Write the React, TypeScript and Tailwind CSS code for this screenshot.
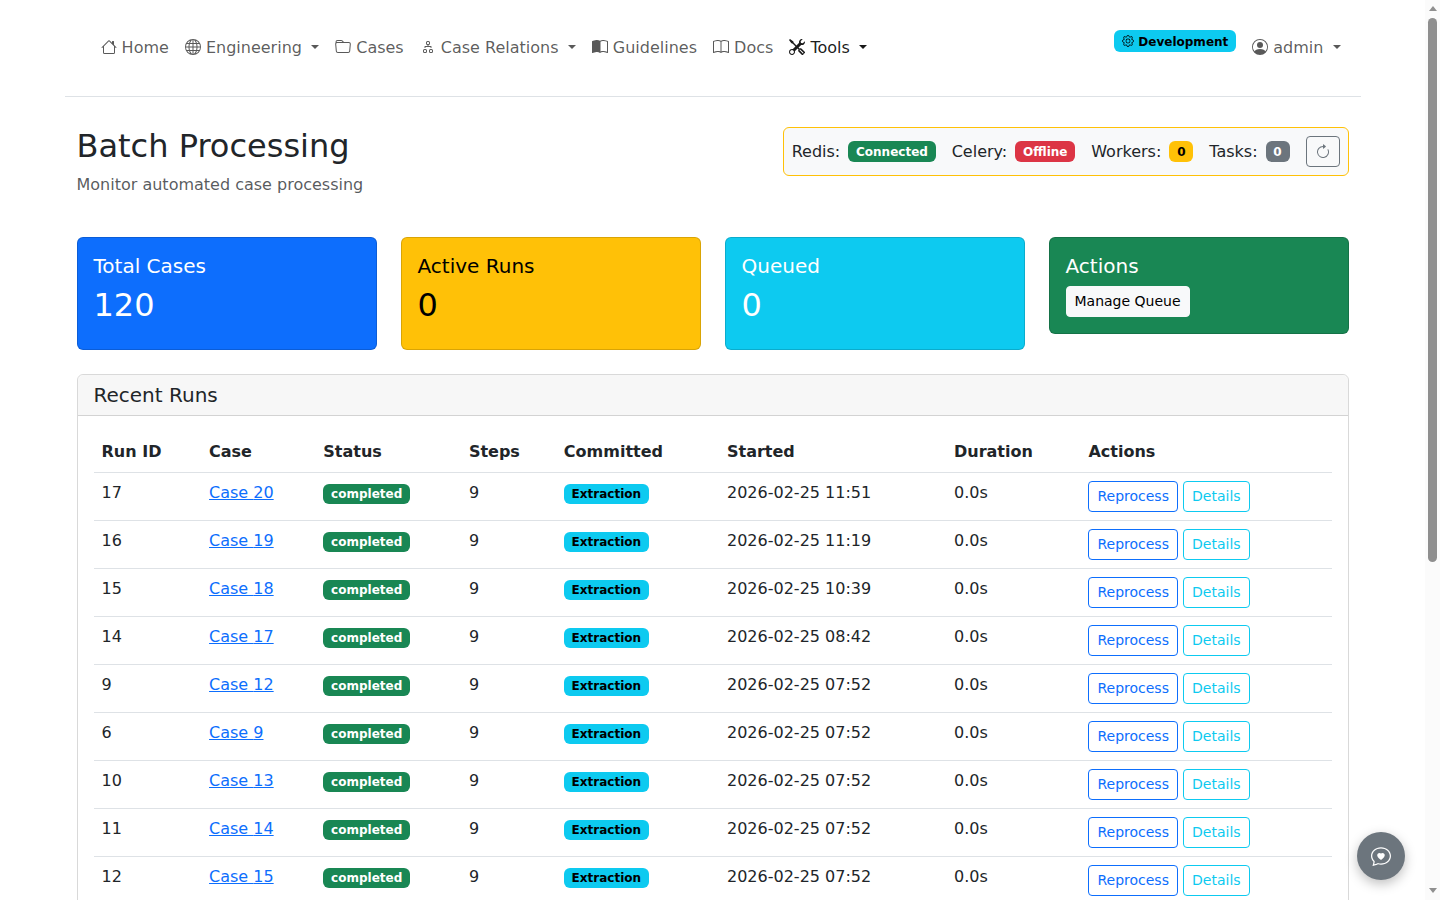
import {
  BsArrowClockwise, BsBook, BsBookHalf, BsChatHeart, BsDiagram2, BsFolder, BsGear,
  BsGlobe, BsHouse, BsPersonCircle, BsTools,
} from 'react-icons/bs';
import type { IconType } from 'react-icons';

const NAV_ITEMS: { label: string; icon: IconType; caret?: boolean; active?: boolean }[] = [
  { label: 'Home', icon: BsHouse },
  { label: 'Engineering', icon: BsGlobe, caret: true },
  { label: 'Cases', icon: BsFolder },
  { label: 'Case Relations', icon: BsDiagram2, caret: true },
  { label: 'Guidelines', icon: BsBookHalf },
  { label: 'Docs', icon: BsBook },
  { label: 'Tools', icon: BsTools, caret: true, active: true },
];

const RUNS = [
  { id: 17, caseNo: 20, started: '2026-02-25 11:51' },
  { id: 16, caseNo: 19, started: '2026-02-25 11:19' },
  { id: 15, caseNo: 18, started: '2026-02-25 10:39' },
  { id: 14, caseNo: 17, started: '2026-02-25 08:42' },
  { id: 9, caseNo: 12, started: '2026-02-25 07:52' },
  { id: 6, caseNo: 9, started: '2026-02-25 07:52' },
  { id: 10, caseNo: 13, started: '2026-02-25 07:52' },
  { id: 11, caseNo: 14, started: '2026-02-25 07:52' },
  { id: 12, caseNo: 15, started: '2026-02-25 07:52' },
];

const BADGE = 'inline-block rounded-md px-[.65em] py-[.35em] text-xs leading-none font-bold whitespace-nowrap align-baseline';
const BTN_SM = 'inline-block rounded border px-2 py-1 text-sm leading-[21px]';
const TH = 'border-b border-[#dee2e6] p-2 text-left font-bold';
const TD = 'border-b border-[#dee2e6] p-2 align-top';

function Caret() {
  return (
    <span className="ml-[.255em] inline-block border-x-[.3em] border-t-[.3em] border-b-0 border-x-transparent align-[.255em]" />
  );
}

function NavLink({ label, icon: Icon, caret, active }: (typeof NAV_ITEMS)[number]) {
  return (
    <a className={`block px-2 py-2 whitespace-nowrap ${active ? 'text-black/90' : 'text-black/65'}`}>
      <Icon className="inline-block align-[-0.125em]" size={16} /> {label}
      {caret && <> <Caret /></>}
    </a>
  );
}

function StatCard({ title, value, className }: { title: string; value: string; className: string }) {
  return (
    <div className={`rounded-md border border-black/15 p-4 ${className}`}>
      <h5 className="mb-2 text-xl leading-[24px]">{title}</h5>
      <div className="mb-2 text-[32px] leading-[38.4px]">{value}</div>
    </div>
  );
}

// the browser's own scrollbar is hidden in the capture, so it is drawn over the right edge
function Scrollbar() {
  return (
    <div className="fixed top-0 right-0 bottom-0 flex w-[15px] flex-col items-center bg-[#fbfbfb] pt-[6px] pb-[7px]">
      <span className="border-x-[4.5px] border-b-[5px] border-t-0 border-x-transparent border-b-[#8f8f8f]" />
      <span className="mt-[7px] h-[544px] w-[9px] rounded-full bg-[#8f8f8f]" />
      <span className="mt-auto border-x-[4.5px] border-t-[5px] border-b-0 border-x-transparent border-t-[#8f8f8f]" />
    </div>
  );
}

export default function App() {
  return (
    <div className="h-screen overflow-hidden bg-white pr-[15px] font-['DejaVu_Sans',sans-serif] text-base leading-6 text-[#212529]">
      <div className="mx-auto max-w-[1320px] px-3">
        <nav className="flex h-[97px] items-center justify-between border-b border-[#dee2e6] pr-3 pl-7">
          <div className="flex items-center">
            {NAV_ITEMS.map((item) => (
              <NavLink key={item.label} {...item} />
            ))}
          </div>
          <div className="flex items-center gap-2">
            <span className={`${BADGE} mb-[14px] bg-[#0dcaf0] pt-[5px] pb-[4px] text-black`}>
              <BsGear className="inline-block align-[-0.125em]" size={12} /> Development
            </span>
            <NavLink label="admin" icon={BsPersonCircle} caret />
          </div>
        </nav>

        <main className="px-3">
          <div className="mt-[30px] mb-10 flex items-start justify-between">
            <div>
              <h1 className="mb-2 text-[32px] leading-[38.4px]">Batch Processing</h1>
              <p className="text-[#212529]/75">Monitor automated case processing</p>
            </div>
            <div className="flex items-center rounded-md border border-[#ffc107] bg-[#f8f9fa] p-2">
              <span className="mr-2">Redis:</span>
              <span className={`${BADGE} mr-4 bg-[#198754] text-white`}>Connected</span>
              <span className="mr-2">Celery:</span>
              <span className={`${BADGE} mr-4 bg-[#dc3545] text-white`}>Offline</span>
              <span className="mr-2">Workers:</span>
              <span className={`${BADGE} mr-4 bg-[#ffc107] text-black`}>0</span>
              <span className="mr-2">Tasks:</span>
              <span className={`${BADGE} mr-4 bg-[#6c757d] text-white`}>0</span>
              <button className="flex h-[31px] w-[34px] items-center justify-center rounded border border-[#6c757d] text-[#6c757d]">
                <BsArrowClockwise size={16} />
              </button>
            </div>
          </div>

          <div className="mb-6 grid grid-cols-4 items-start gap-6">
            <StatCard title="Total Cases" value="120" className="bg-[#0d6efd] text-white" />
            <StatCard title="Active Runs" value="0" className="bg-[#ffc107] text-black" />
            <StatCard title="Queued" value="0" className="bg-[#0dcaf0] text-white" />
            <div className="rounded-md border border-black/15 bg-[#198754] p-4 text-white">
              <h5 className="mb-2 text-xl leading-[24px]">Actions</h5>
              <button className={`${BTN_SM} border-[#f8f9fa] bg-[#f8f9fa] text-black`}>Manage Queue</button>
            </div>
          </div>

          <div className="mb-6 rounded-md border border-black/15">
            <div className="rounded-t-md border-b border-black/15 bg-black/[.03] px-4 py-2">
              <h5 className="text-xl leading-[24px]">Recent Runs</h5>
            </div>
            <div className="p-4">
              <table className="mb-4 w-full border-collapse">
                <thead>
                  <tr>
                    <th className={TH}>Run ID</th>
                    <th className={TH}>Case</th>
                    <th className={TH}>Status</th>
                    <th className={TH}>Steps</th>
                    <th className={TH}>Committed</th>
                    <th className={TH}>Started</th>
                    <th className={TH}>Duration</th>
                    <th className={TH}>Actions</th>
                  </tr>
                </thead>
                <tbody>
                  {RUNS.map((r) => (
                    <tr key={r.id}>
                      <td className={TD}>{r.id}</td>
                      <td className={TD}>
                        <a className="text-[#0d6efd] underline">Case {r.caseNo}</a>
                      </td>
                      <td className={TD}>
                        <span className={`${BADGE} bg-[#198754] text-white`}>completed</span>
                      </td>
                      <td className={TD}>9</td>
                      <td className={TD}>
                        <span className={`${BADGE} bg-[#0dcaf0] text-black`}>Extraction</span>
                      </td>
                      <td className={TD}>{r.started}</td>
                      <td className={TD}>0.0s</td>
                      <td className={TD}>
                        <button className={`${BTN_SM} border-[#0d6efd] text-[#0d6efd]`}>Reprocess</button>{' '}
                        <button className={`${BTN_SM} border-[#0dcaf0] text-[#0dcaf0]`}>Details</button>
                      </td>
                    </tr>
                  ))}
                </tbody>
              </table>
            </div>
          </div>
        </main>
      </div>

      <button className="fixed right-[35px] bottom-5 flex size-12 items-center justify-center rounded-full bg-[#6c757d] text-white shadow-[0_4px_12px_rgba(0,0,0,.25)]">
        <BsChatHeart size={20} />
      </button>
      <Scrollbar />
    </div>
  );
}
